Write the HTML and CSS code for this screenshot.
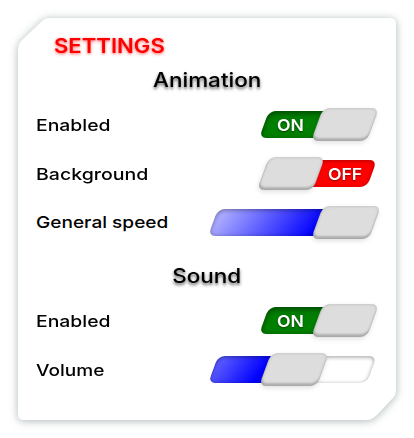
FILE: index.html
```html
<!DOCTYPE html>
<html lang="en">
<head>
<meta charset="utf-8">
<title>Settings</title>
<link rel="stylesheet" href="styles.css">
</head>
<body>
<main class="panel">
  <svg class="panel-shape" width="378" height="402" viewBox="0 0 378 402" aria-hidden="true">
    <path d="M31 0H372Q378 0 378 6V373Q378 377 375 380L360 396Q354 402 349 402H6Q0 402 0 396V31Q0 27 3 23L23 4Q27 0 31 0Z"/>
  </svg>
  <h1><span class="text w-settings">SETTINGS</span></h1>
  <section>
    <h2><span class="text w-animation">Animation</span></h2>
    <div class="row">
      <span class="text w-enabled">Enabled</span>
      <div class="control on"><div class="track"></div><span class="state">ON</span><div class="knob"></div></div>
    </div>
    <div class="row">
      <span class="text w-background">Background</span>
      <div class="control off"><div class="track"></div><span class="state">OFF</span><div class="knob"></div></div>
    </div>
    <div class="row">
      <span class="text w-speed">General speed</span>
      <div class="control range full"><div class="track"></div><div class="knob"></div></div>
    </div>
  </section>
  <section>
    <h2><span class="text w-sound">Sound</span></h2>
    <div class="row">
      <span class="text w-enabled">Enabled</span>
      <div class="control on"><div class="track"></div><span class="state">ON</span><div class="knob"></div></div>
    </div>
    <div class="row">
      <span class="text w-volume">Volume</span>
      <div class="control range part"><div class="track"></div><div class="knob"></div></div>
    </div>
  </section>
</main>
</body>
</html>
```
FILE: styles.css
```css
* { box-sizing: border-box; }
body {
  margin: 0;
  padding: 18px;
  background: #fff;
  color: #000;
  font-family: Inter, sans-serif;
  overflow: hidden;
}
.panel {
  position: relative;
  width: 378px;
  height: 402px;
  padding: 16px 24px 0 18px;
}
.panel-shape {
  position: absolute;
  inset: 0;
  z-index: -1;
  overflow: visible;
  fill: #fff;
  filter: drop-shadow(0 1px 4px rgba(45, 75, 75, .4));
}
h1, h2 {
  margin: 0;
  font-size: 20px;
  line-height: 24px;
  font-weight: 600;
}
h1 {
  padding-left: 18px;
  color: #f00;
  text-shadow: 0 1px 3px rgba(255, 0, 0, .65);
}
h2 {
  display: flex;
  justify-content: center;
  height: 24px;
  margin: 10px -6px 0 0;
  font-weight: 500;
  text-shadow: 0 2px 3px rgba(0, 0, 0, .65);
}
section + section h2 { margin-top: 28px; }
.text {
  display: inline-block;
  white-space: nowrap;
  transform-origin: left center;
}
h2 .text { transform-origin: center; }
.w-settings { transform: scaleX(1.105); }
.w-animation { transform: scaleX(1.125); }
.w-sound { transform: scaleX(1.125); }
.w-enabled { transform: scaleX(1.175); }
.w-background { transform: scaleX(1.185); }
.w-speed { transform: translateY(-1px) scaleX(1.155); }
.w-volume { transform: scaleX(1.155); }
.row {
  display: flex;
  align-items: center;
  justify-content: space-between;
  height: 27px;
  margin-top: 22px;
  font-size: 16.5px;
  line-height: 28px;
  font-weight: 500;
}
h2 + .row { margin-top: 19px; }
.control {
  position: relative;
  width: 108px;
  height: 27px;
}
.range { width: 159px; }
.track {
  height: 27px;
  border-radius: 7px;
  transform: skewX(-20deg);
}
.on .track {
  background: #008000;
  box-shadow: inset 0 2px 6px rgba(0, 0, 0, .5);
}
.off .track {
  background: #f00;
  box-shadow: inset 0 1px 4px rgba(0, 0, 0, .3);
}
.full .track {
  background: linear-gradient(110deg, #aaf 5%, #00f 67%);
  box-shadow: inset 0 1px 5px rgba(0, 0, 0, .4);
}
.part .track {
  background: linear-gradient(110deg, #55f 12%, #00f 80%) 0 0 / 60px 100% no-repeat, #fff;
  box-shadow: inset 0 1px 4px rgba(0, 0, 0, .4);
}
.knob {
  position: absolute;
  top: -3px;
  left: 53px;
  width: 56px;
  height: 33px;
  border-radius: 7px;
  background: #ddd;
  box-shadow: inset 0 -3px 2px rgba(0, 0, 0, .18), inset 0 0 3px rgba(0, 0, 0, .18), 0 2px 5px rgba(0, 0, 0, .12);
  transform: skewX(-20deg);
}
.off .knob { left: -1px; }
.full .knob { left: 104px; width: 58px; }
.part .knob { left: 52px; width: 58px; }
.state {
  position: absolute;
  top: 0;
  left: 13px;
  color: #fff;
  font-size: 16px;
  line-height: 28px;
  font-weight: 600;
  transform: scaleX(1.1);
  transform-origin: left;
  text-shadow: 0 1px 2px rgba(0, 0, 0, .5);
}
.off .state { left: 64px; }
```
